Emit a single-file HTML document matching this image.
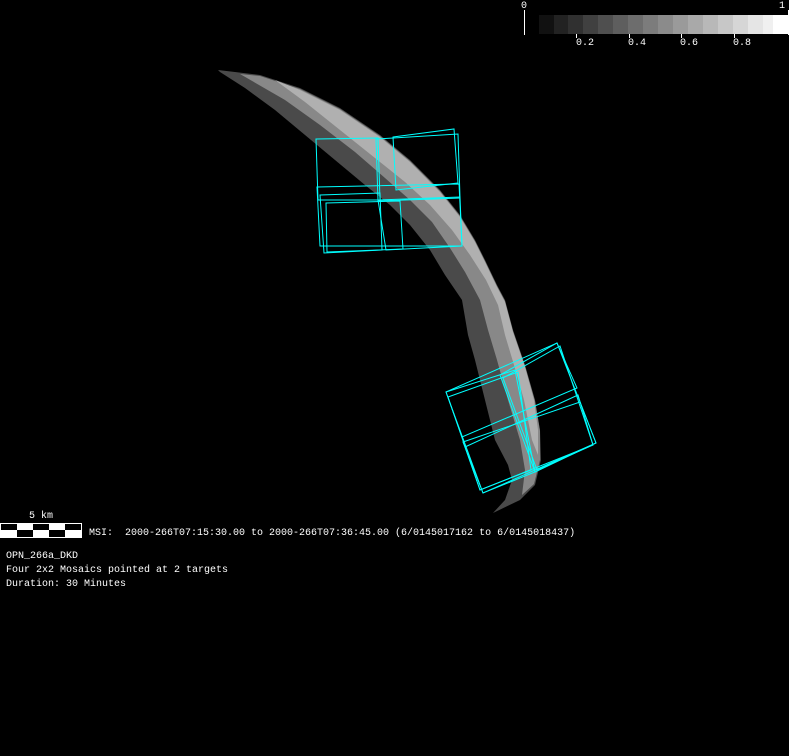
<!DOCTYPE html>
<html><head><style>
body{margin:0;background:#000;width:789px;height:756px;overflow:hidden;position:relative;font-family:"Liberation Mono",monospace;color:#fff;font-size:10px}
.t{position:absolute;white-space:pre;line-height:12px}
</style></head><body>
<svg width="789" height="756" style="position:absolute;left:0;top:0">
<path d="M218,70 L260,75 L300,88 L340,108 L380,135 L410,160 L440,190 L460,215 L475,240 L485,260 L497,285 L505,300 L513,330 L525,365 L535,400 L540,430 L541,460 L535,485 L520,500 L493,513 L505,500 L512,480 L508,465 L495,440 L485,400 L475,360 L468,335 L462,300 L445,275 L430,250 L410,225 L390,205 L365,185 L335,160 L305,135 L275,110 L245,88 L220,72 Z" fill="#4a4a4a"/>
<path d="M240,74 L260,76 L300,89 L340,109 L380,136 L410,161 L440,191 L460,216 L475,241 L485,261 L497,286 L505,301 L513,331 L525,366 L535,401 L540,431 L540,460 L534,484 L522,495 L525,470 L520,440 L508,400 L497,360 L488,330 L480,300 L465,272 L450,248 L432,222 L410,200 L385,178 L355,152 L320,125 L285,100 Z" fill="#888"/>
<path d="M275,80 L300,90 L340,110 L380,137 L410,162 L440,192 L460,217 L475,242 L485,262 L497,287 L505,302 L513,332 L525,367 L534,400 L538,430 L538,455 L532,440 L524,400 L514,365 L505,335 L498,305 L486,280 L470,255 L452,230 L430,205 L405,182 L375,158 L340,130 L305,102 Z" fill="#b0b0b0"/>
<g fill="none" stroke="#0ff" stroke-width="1">
<polygon points="316,139 378,138 380,200 318,200"/>
<polygon points="376,139 458,134 460,198 378,201"/>
<polygon points="393,137 454,129 458,183 396,190"/>
<polygon points="317,187 459,184 462,246 320,246"/>
<polygon points="320,195 380,193 382,250 324,253"/>
<polygon points="378,200 460,197 462,246 386,250"/>
<polygon points="326,203 400,201 403,249 327,252"/>
<polygon points="446,392 515,370 535,472 483,493"/>
<polygon points="448,397 518,372 531,470 480,490"/>
<polygon points="500,375 557,343 596,443 535,472"/>
<polygon points="503,378 560,346 593,445 537,470"/>
<polygon points="446,392 557,343 577,388 462,437"/>
<polygon points="463,442 580,402 596,443 483,493"/>
<polygon points="465,447 578,395 593,445 480,490"/>
</g>
<g>
<line x1="524.5" y1="10" x2="524.5" y2="35" stroke="#fff"/>
<line x1="788.5" y1="10" x2="788.5" y2="35" stroke="#fff"/>
<rect x="539" y="15" width="15" height="19" fill="#111"/><rect x="554" y="15" width="14.6" height="19" fill="#222"/>
<rect x="568" y="15" width="15" height="19" fill="#303030"/><rect x="583" y="15" width="15" height="19" fill="#404040"/>
<rect x="598" y="15" width="15" height="19" fill="#4f4f4f"/><rect x="613" y="15" width="15" height="19" fill="#5e5e5e"/>
<rect x="628" y="15" width="15" height="19" fill="#6d6d6d"/><rect x="643" y="15" width="15" height="19" fill="#7c7c7c"/>
<rect x="658" y="15" width="15" height="19" fill="#8b8b8b"/><rect x="673" y="15" width="15" height="19" fill="#9a9a9a"/>
<rect x="688" y="15" width="15" height="19" fill="#a9a9a9"/><rect x="703" y="15" width="15" height="19" fill="#b8b8b8"/>
<rect x="718" y="15" width="15" height="19" fill="#c7c7c7"/><rect x="733" y="15" width="15" height="19" fill="#d6d6d6"/>
<rect x="748" y="15" width="15" height="19" fill="#e5e5e5"/><rect x="763" y="15" width="15" height="19" fill="#f0f0f0"/>
<rect x="773" y="15" width="15" height="19" fill="#fff"/>
<g stroke="#fff"><line x1="576.5" y1="34" x2="576.5" y2="38"/><line x1="629.5" y1="34" x2="629.5" y2="38"/><line x1="681.5" y1="34" x2="681.5" y2="38"/><line x1="734.5" y1="34" x2="734.5" y2="38"/></g>
</g>
<rect x="0" y="523" width="82" height="15" fill="#fff"/>
<g fill="#000">
<rect x="1" y="524" width="16" height="6"/><rect x="33" y="524" width="16" height="6"/><rect x="65" y="524" width="16" height="6"/>
<rect x="17" y="530" width="16" height="7"/><rect x="49" y="530" width="16" height="7"/>
</g>
</svg>
<div class="t" style="left:521px;top:1px">0</div>
<div class="t" style="left:779px;top:1px">1</div>
<div class="t" style="left:576px;top:38px">0.2</div>
<div class="t" style="left:628px;top:38px">0.4</div>
<div class="t" style="left:680px;top:38px">0.6</div>
<div class="t" style="left:733px;top:38px">0.8</div>
<div class="t" style="left:29px;top:511px">5 km</div>
<div class="t" style="left:89px;top:528px">MSI:  2000-266T07:15:30.00 to 2000-266T07:36:45.00 (6/0145017162 to 6/0145018437)</div>
<div class="t" style="left:6px;top:551px">OPN_266a_DKD</div>
<div class="t" style="left:6px;top:565px">Four 2x2 Mosaics pointed at 2 targets</div>
<div class="t" style="left:6px;top:579px">Duration: 30 Minutes</div>
</body></html>
